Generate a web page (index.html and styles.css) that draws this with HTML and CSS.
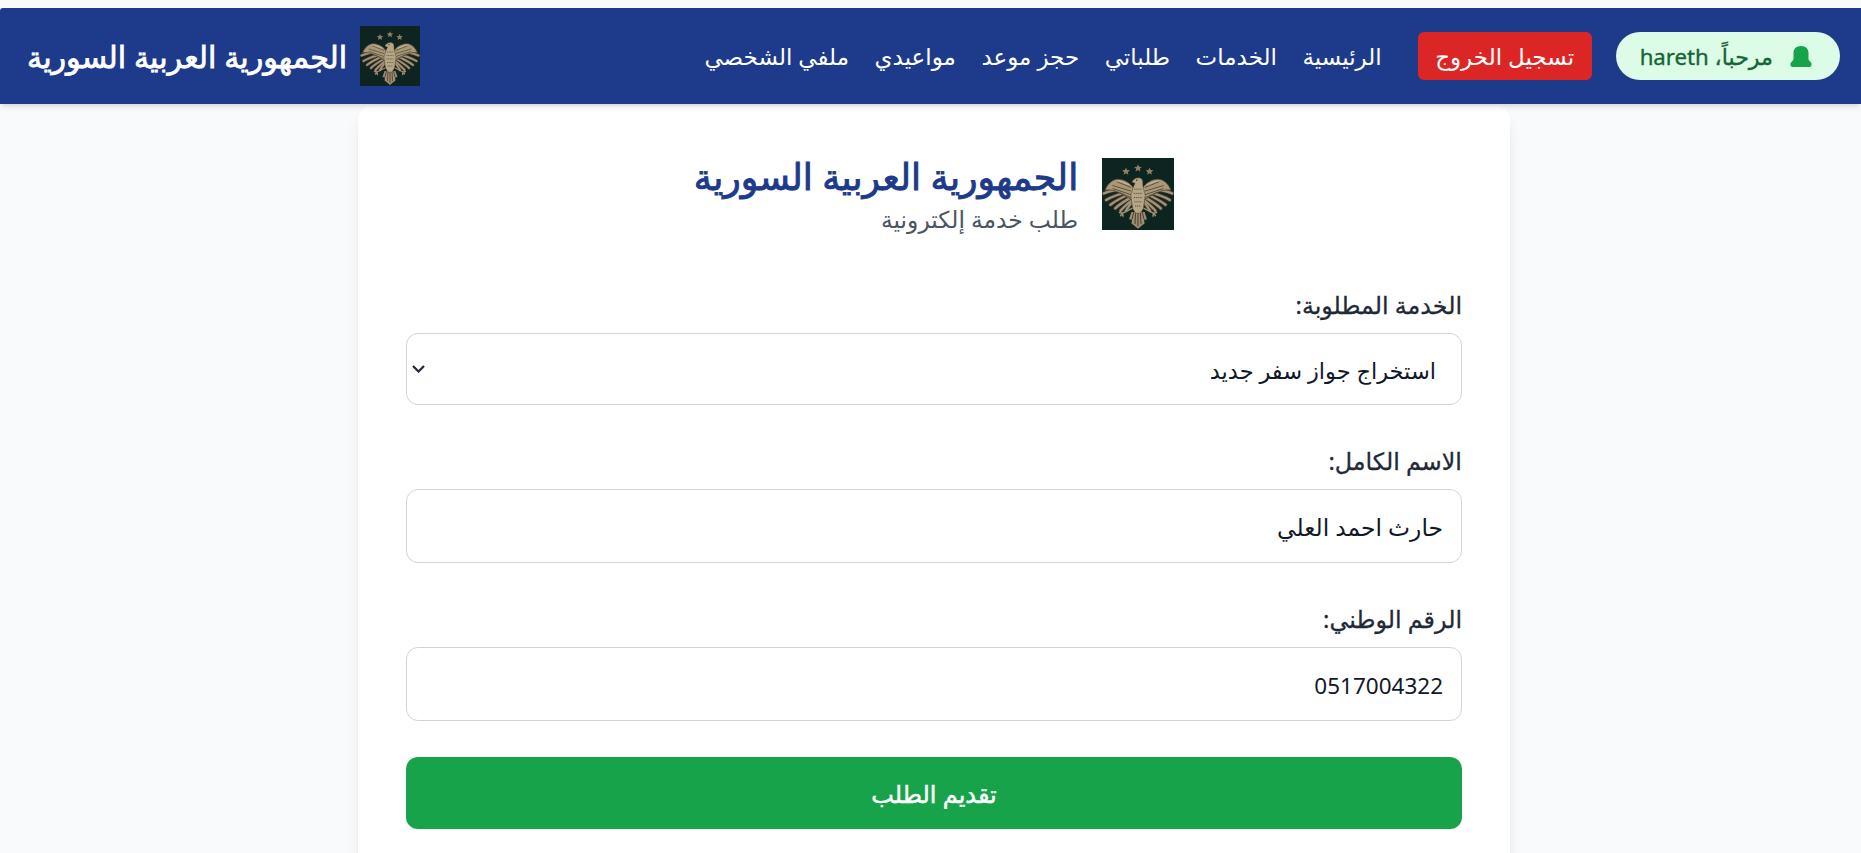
FILE: index.html
```html
<!DOCTYPE html>
<html lang="ar" dir="rtl">
<head>
<meta charset="utf-8">
<title>الجمهورية العربية السورية</title>
<link rel="stylesheet" href="styles.css">
</head>
<body>
<svg class="defs" width="0" height="0" aria-hidden="true">
  <symbol id="eagle" viewBox="0 0 60 60">
    <rect width="60" height="60" fill="#0d2420"/>
    <g fill="#8f7f62">
      <path d="M20 8l.9 2.100 2.300.2-1.700 1.500.5 2.200-2-1.200-2 1.200.5-2.200-1.700-1.500 2.300-.2z"/>
      <path d="M30 5.200l.9 2.100 2.300.2-1.700 1.500.5 2.200-2-1.200-2 1.200.5-2.200-1.700-1.500 2.300-.2z"/>
      <path d="M39.600 8l.9 2.100 2.300.2-1.700 1.500.5 2.200-2-1.200-2 1.200.5-2.200-1.700-1.500 2.300-.2z"/>
    </g>
    <g id="wing" fill="none" stroke-linecap="round">
      <g stroke="#3f3629" stroke-width="3.400">
        <path d="M24 38Q21 42 20 44"/>
        <path d="M24 36Q18 41 15.500 44"/>
        <path d="M24 33Q15 38 11 42"/>
        <path d="M23 30Q12 35 7 39"/>
        <path d="M23 28Q10 31 3.500 35"/>
        <path d="M23 26Q9 26 1.500 29.500"/>
      </g>
      <g stroke="#a29276" stroke-width="2">
        <path d="M24 38Q21 42 20 44"/>
        <path d="M24 36Q18 41 15.500 44"/>
        <path d="M24 33Q15 38 11 42"/>
        <path d="M23 30Q12 35 7 39"/>
        <path d="M23 28Q10 31 3.500 35"/>
        <path d="M23 26Q9 26 1.500 29.500"/>
      </g>
      <path d="M26 24.500C22 19 16 17 11.500 17.800 7.500 19 4 22.500 2.500 27 8 25.500 14 28 25 35Z" fill="#a89878" stroke="#463c2d" stroke-width=".6"/>
      <path d="M24 24.500 13 20M24 27.500 9 23M24 30.500 9 25.500M24 33 14 28.500" stroke="#5a4f3c" stroke-width=".8"/>
      <path d="M22 22 13 18.800" stroke="#c9bb9c" stroke-width=".8"/>
    </g>
    <use href="#wing" transform="matrix(-1 0 0 1 60 0)"/>
    <g fill="none" stroke="#9c8c70" stroke-width="1.300" stroke-linecap="round">
      <path d="M25 42 17 46M17 46l-2.500-.5M17 46l-1.500 2M17 46l.5 2.500"/>
      <path d="M35 42 43 46M43 46l2.500-.5M43 46l1.500 2M43 46l-.5 2.500"/>
    </g>
    <path d="M30 59l-3.500-3-2-1.500.5-3-2.500-.5 2-6h11l2 6-2.500.5.5 3-2 1.500z" fill="#9c8c70"/>
    <path d="M30 57V45M27.500 55l.5-10M32.500 55 32 45M25 51l1.500-6M35 51l-1.500-6" fill="none" stroke="#463c2d" stroke-width=".8"/>
    <path d="M25 19.500 27 17.500C29 16 32.500 16.300 33.500 18 34.500 20 33.500 22 34.500 25L36 31 34.500 42 32 46H28L25.500 42 24 31 26 24.500 27.500 21 25.500 20.500Z" fill="#b5a686" stroke="#463c2d" stroke-width=".4"/>
    <path d="M27 26h6M26.500 29.500h7M26.500 33h7M27 36.500h6M27.500 40h5" fill="none" stroke="#5a4f3c" stroke-width=".8" stroke-dasharray="1 .6"/>
    <circle cx="29" cy="18.600" r=".6" fill="#2a2419"/>
  </symbol>
</svg>
<header class="topbar">
  <div class="top-actions">
    <div class="welcome">
      <svg class="bell" viewBox="0 0 22 21" aria-hidden="true"><path d="M11 0C6 0 3.500 3 3.500 7V13C3.500 14.500 2 15 .8 16.800 0 18.500 .5 21 2.500 21H19.500C21.500 21 22 18.500 21.200 16.800 20 15 18.500 14.500 18.500 13V7C18.500 3 16 0 11 0Z"/></svg>
      <span>مرحباً، hareth</span>
    </div>
    <a class="logout" href="#">تسجيل الخروج</a>
    <nav class="nav">
      <a href="#">الرئيسية</a>
      <a href="#">الخدمات</a>
      <a href="#">طلباتي</a>
      <a href="#">حجز موعد</a>
      <a href="#">مواعيدي</a>
      <a href="#">ملفي الشخصي</a>
    </nav>
  </div>
  <div class="brand">
    <svg class="brand-logo" role="img" aria-label="شعار"><use href="#eagle"/></svg>
    <span class="brand-name">الجمهورية العربية السورية</span>
  </div>
</header>
<main class="card">
  <div class="card-head">
    <svg class="card-logo" role="img" aria-label="شعار"><use href="#eagle"/></svg>
    <div class="card-title">
      <h1>الجمهورية العربية السورية</h1>
      <p>طلب خدمة إلكترونية</p>
    </div>
  </div>
  <form class="form">
    <div class="field">
      <label for="svc">الخدمة المطلوبة:</label>
      <div class="select-wrap">
        <select id="svc" class="control control-select"><option>استخراج جواز سفر جديد</option></select>
        <svg class="chevron" viewBox="0 0 13 8" aria-hidden="true"><path d="M1 1l5.500 5.500L12 1"/></svg>
      </div>
    </div>
    <div class="field">
      <label for="name">الاسم الكامل:</label>
      <input id="name" class="control" value="حارث احمد العلي">
    </div>
    <div class="field">
      <label for="nid">الرقم الوطني:</label>
      <input id="nid" class="control control-num" value="0517004322">
    </div>
    <button type="button" class="submit">تقديم الطلب</button>
  </form>
</main>
</body>
</html>
```
FILE: styles.css
```css
* { box-sizing: border-box; }
html { background: #f9fafb; overflow: hidden; }
body {
  margin: 0;
  height: 853px;
  overflow: hidden;
  padding-top: 8px;
  background: #f9fafb;
  color: #1f2937;
  font-family: "Noto Sans", "DejaVu Sans", sans-serif;
}
.defs { position: absolute; }
.topbar {
  height: 96px;
  background: #1e3a8a;
  color: #fff;
  padding: 0 21px 0 27px;
  display: flex;
  align-items: center;
  justify-content: space-between;
  border-top-left-radius: 3px;
  box-shadow: 0 4px 6px -1px rgba(0,0,0,.1), 0 2px 4px -2px rgba(0,0,0,.1);
  position: relative;
  z-index: 2;
}
.brand { display: flex; align-items: center; gap: 13px; }
.brand-logo { width: 60px; height: 60px; display: block; }
.brand-name { font-size: 30.150px; -webkit-text-stroke: .8px #fff; }
.top-actions { display: flex; align-items: center; gap: 24px; }
.nav { display: flex; gap: 25.500px; margin-inline-start: 12px; font-size: 23px; }
.nav a { color: #fff; text-decoration: none; }
.logout {
  background: #dc2626;
  color: #fff;
  text-decoration: none;
  font-size: 23px;
  padding: 0 17.500px;
  border-radius: 6px;
  height: 48px;
  display: flex;
  align-items: center;
}
.welcome {
  display: flex;
  align-items: center;
  gap: 17px;
  height: 48px;
  padding: 0 28px 0 24px;
  border-radius: 999px;
  background: #dcfce7;
  color: #166534;
  font-size: 22.200px;
  -webkit-text-stroke: .35px #166534;
}
.bell { width: 22px; height: 21px; fill: #16a34a; }
.card {
  width: 1152px;
  margin: 2px 351px 0 auto;
  background: #fff;
  border-radius: 14px;
  padding: 45px 48px 48px;
  box-shadow: 0 10px 15px -3px rgba(0,0,0,.1), 0 4px 6px -4px rgba(0,0,0,.1);
}
.card-head { display: flex; align-items: center; justify-content: center; gap: 24px; margin-bottom: 52px; }
.card-logo { width: 72px; height: 72px; display: block; }
.card-title h1 { margin: 0; font-size: 36.200px; font-weight: 400; -webkit-text-stroke: .95px #1e3a8a; color: #1e3a8a; line-height: 50px; }
.card-title p { margin: 0; font-size: 23.400px; color: #4b5563; line-height: 36px; }
.form { display: flex; flex-direction: column; }
.field { display: flex; flex-direction: column; gap: 12px; }
.field + .field { margin-top: 40px; }
.field label {
  font-size: 23.800px;
  color: #1f2937;
  line-height: 32px;
  -webkit-text-stroke: .3px #1f2937;
}
.select-wrap { position: relative; }
.control {
  display: block;
  width: 100%;
  height: 74px;
  border: 1px solid #d1d5db;
  border-radius: 12px;
  background: #fff;
  padding: 2px 18px 0;
  font: 23.400px "Noto Sans", "DejaVu Sans", sans-serif;
  color: #111827;
}
.control-select {
  appearance: none;
  height: 72px;
  padding: 2px 25px 0;
  font-size: 22.500px;
}
.control-num { font-size: 22.500px; }
.chevron {
  position: absolute;
  left: 6px;
  top: 32px;
  width: 13px;
  height: 8px;
  fill: none;
  stroke: #1f2937;
  stroke-width: 2.200;
}
.submit {
  height: 72px;
  margin-top: 36px;
  border: 0;
  border-radius: 12px;
  background: #16a34a;
  color: #fff;
  font: 24px "Noto Sans", "DejaVu Sans", sans-serif;
  -webkit-text-stroke: .5px #fff;
  box-shadow: 0 1px 2px rgba(0,0,0,.05);
}
```
